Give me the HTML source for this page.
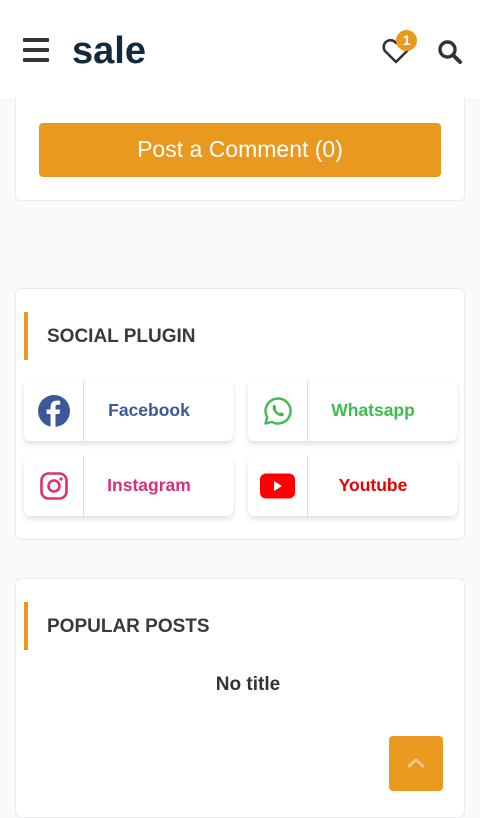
<!DOCTYPE html>
<html><head><meta charset="utf-8"><style>
*{box-sizing:border-box;margin:0;padding:0}
body{width:480px;height:800px;overflow:hidden;background:#f9fafc;font-family:"Liberation Sans",sans-serif;position:relative}
.hdr{position:absolute;left:0;top:0;width:480px;height:98px;background:#fff;z-index:2}
.card{position:absolute;left:15px;width:450px;background:#fff;border:1px solid #e8eaee;border-radius:6px}
.btn{position:absolute;left:39px;top:123px;width:402px;height:54px;background:#ea9920;border-radius:4px;color:#fff;font-size:23px;text-align:center;line-height:52px}
.ttl{position:absolute;left:24px;width:4px;height:48px;background:#ea9920}
.tt{position:absolute;left:47px;font-size:19px;font-weight:bold;color:#3a3a3a}
.sb{position:absolute;width:209px;height:60px;background:#fff;border-radius:6px;box-shadow:0 3px 6px rgba(0,0,0,.12)}
.sb .ic{position:absolute;left:0;top:0;width:60px;height:60px;border-right:1px solid #ddd;display:flex;align-items:center;justify-content:center}
.sb .lb{position:absolute;left:60px;right:19px;top:0;line-height:58px;text-align:center;font-size:17.5px;font-weight:bold}
</style></head><body>
<div class="hdr">
 <div style="position:absolute;left:23px;top:38px;width:26px;height:4px;background:#333;border-radius:1px"></div>
 <div style="position:absolute;left:23px;top:48px;width:26px;height:4px;background:#333;border-radius:1px"></div>
 <div style="position:absolute;left:23px;top:58px;width:26px;height:4px;background:#333;border-radius:1px"></div>
 <div style="position:absolute;left:72px;top:30px;font-size:38px;font-weight:bold;color:#13293d">sale</div>
 <svg style="position:absolute;left:381px;top:36px" width="30" height="30" viewBox="0 0 30 30"><path d="M15 26 L4 15 A6.5 6.5 0 0 1 15 7 A6.5 6.5 0 0 1 26 15 Z" fill="none" stroke="#333" stroke-width="2.6" stroke-linejoin="round"/></svg>
 <div style="position:absolute;left:396px;top:30px;width:21px;height:21px;border-radius:50%;background:#ea9920;color:#fff;font-size:14px;font-weight:bold;text-align:center;line-height:21px">1</div>
 <svg style="position:absolute;left:437px;top:39px" width="26" height="26" viewBox="0 0 26 26"><circle cx="10.5" cy="10.5" r="7.5" fill="none" stroke="#333" stroke-width="3.4"/><path d="M16 16 L23 23" stroke="#333" stroke-width="4" stroke-linecap="round"/></svg>
</div>
<div class="card" style="top:60px;height:141px"></div>
<div class="btn">Post a Comment (0)</div>
<div class="card" style="top:288px;height:252px"></div>
<div class="ttl" style="top:312px"></div><div class="tt" style="top:326px">SOCIAL PLUGIN</div>
<div class="sb" style="left:24px;top:381px"><div class="ic"><svg width="32" height="32" viewBox="0 0 32 32"><circle cx="16" cy="16" r="16" fill="#3b5998"/><path d="M17.5 32V19h4l.6-4.5h-4.6v-2.6c0-1.3.4-2.2 2.2-2.2h2.5V5.8c-.4-.1-1.9-.2-3.6-.2-3.6 0-6 2.200-6 6.2v2.7H8.6V19h4v13z" fill="#fff"/></svg></div><div class="lb" style="color:#3b5998">Facebook</div></div>
<div class="sb" style="left:248px;top:381px"><div class="ic"><svg width="30" height="30" viewBox="0 0 30 30"><path d="M15 2.5A12.5 12.5 0 0 0 4.2 21.3L2.5 27.5l6.4-1.6A12.5 12.5 0 1 0 15 2.5z" fill="none" stroke="#3fbb4f" stroke-width="2.4" stroke-linejoin="round"/><path d="M10.5 9c.5-.6 1.3-.5 1.6.1l1.2 2.6c.2.5-.2 1-.6 1.4-.3.3 1.5 3 4 4 .4-.3.9-1 1.4-.8l2.5 1.2c.6.3.6 1.2 0 1.8-1 1-2.7 1.3-4.8.3-2.6-1.2-4.8-3.5-5.8-5.800-.7-1.7-.4-3.4.5-4.8z" fill="#3fbb4f"/></svg></div><div class="lb" style="color:#3fbb4f">Whatsapp</div></div>
<div class="sb" style="left:24px;top:456px"><div class="ic"><svg width="30" height="30" viewBox="0 0 30 30"><rect x="2.5" y="2.5" width="25" height="25" rx="7" fill="none" stroke="#e1306c" stroke-width="2.6"/><circle cx="15" cy="15" r="5.5" fill="none" stroke="#e1306c" stroke-width="2.6"/><circle cx="22" cy="8" r="1.6" fill="#e1306c"/></svg></div><div class="lb" style="color:#dc2e78">Instagram</div></div>
<div class="sb" style="left:248px;top:456px"><div class="ic"><svg width="36" height="26" viewBox="0 0 36 26"><rect x="0" y="0.5" width="35" height="25" rx="6" fill="#f00"/><path d="M14 8v10l8-5z" fill="#fff"/></svg></div><div class="lb" style="color:#e80000">Youtube</div></div>
<div class="card" style="top:578px;height:240px"></div>
<div class="ttl" style="top:602px"></div><div class="tt" style="top:616px">POPULAR POSTS</div>
<div style="position:absolute;left:15px;width:466px;top:674px;text-align:center;font-size:19px;font-weight:bold;color:#333">No title</div>
<div style="position:absolute;left:389px;top:736px;width:54px;height:55px;background:#ea9920;border-radius:4px"><svg style="position:absolute;left:17px;top:20px" width="20" height="14" viewBox="0 0 20 14"><path d="M3 10L10 4L17 10" fill="none" stroke="#f0c890" stroke-width="3" stroke-linecap="round" stroke-linejoin="round"/></svg></div>
</body></html>
